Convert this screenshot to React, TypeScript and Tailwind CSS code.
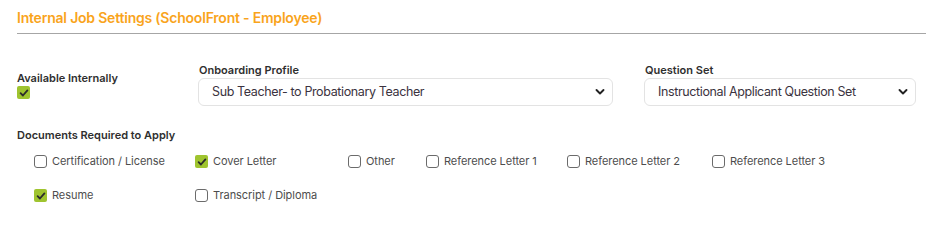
import React from 'react';

// 내부 채용 설정 패널

const FONT = { fontFamily: 'Inter, "Noto Sans", sans-serif' };

const DOCS: { label: string; checked: boolean }[] = [
  { label: 'Certification / License', checked: false },
  { label: 'Cover Letter', checked: true },
  { label: 'Other', checked: false },
  { label: 'Reference Letter 1', checked: false },
  { label: 'Reference Letter 2', checked: false },
  { label: 'Reference Letter 3', checked: false },
  { label: 'Resume', checked: true },
  { label: 'Transcript / Diploma', checked: false },
];

function Box({ checked }: { checked: boolean }): React.ReactElement {
  if (checked) {
    return (
      <span className="flex h-[13px] w-[13px] flex-shrink-0 items-center justify-center rounded-[2px] bg-[#9fc42f]">
        <svg width="10" height="10" viewBox="0 0 10 10" fill="none">
          <path d="M1.6 5.2 L3.9 7.5 L8.4 2.4" stroke="#2b2b2b" strokeWidth="1.8" strokeLinecap="round" strokeLinejoin="round" />
        </svg>
      </span>
    );
  }
  return <span className="h-[13px] w-[13px] flex-shrink-0 rounded-[3px] border border-[#6b6b6b] bg-white" />;
}

function Select({ value }: { value: string }): React.ReactElement {
  return (
    <div className="flex h-[28px] items-center justify-between rounded-[6px] border border-[#e3e3e3] bg-white pl-[13px] pr-[7px]">
      <span className="text-[12.5px] tracking-[-0.03em] text-[#3b3340]">{value}</span>
      <svg width="10" height="8" viewBox="0 0 10 8" fill="none">
        <path d="M1.5 2 L5 5.5 L8.5 2" stroke="#222" strokeWidth="1.9" strokeLinecap="round" strokeLinejoin="round" />
      </svg>
    </div>
  );
}

export default function App(): React.ReactElement {
  return (
    <div className="h-[230px] w-[941px] bg-white pl-[17px] pr-[15px] pt-[9px]" style={FONT}>
      <div className="border-b border-[#a6a6a6] pb-[7px]">
        <h2 className="text-[14px] font-semibold leading-[17px] tracking-[-0.015em] text-[#f9a41c]">
          Internal Job Settings (SchoolFront - Employee)
        </h2>
      </div>

      {/* 상단 설정 행 */}
      <div className="mt-[29px] flex">
        <div className="w-[181px] pt-[8px]">
          <p className="text-[11px] font-semibold leading-[14px] tracking-[0em] text-[#2f2f2f]">Available Internally</p>
          <div className="mt-[1px]">
            <Box checked />
          </div>
        </div>
        <div className="w-[415px]">
          <p className="pl-[1px] text-[11px] font-semibold leading-[14px] tracking-[0em] text-[#2f2f2f]">Onboarding Profile</p>
          <div className="mt-[1px]">
            <Select value="Sub Teacher- to Probationary Teacher" />
          </div>
        </div>
        <div className="ml-[31px] w-[272px]">
          <p className="pl-[1px] text-[11px] font-semibold leading-[14px] tracking-[0em] text-[#2f2f2f]">Question Set</p>
          <div className="mt-[1px]">
            <Select value="Instructional Applicant Question Set" />
          </div>
        </div>
      </div>

      {/* 필요 서류 */}
      <p className="mt-[22px] text-[11px] font-semibold leading-[14px] tracking-[0em] text-[#2f2f2f]">Documents Required to Apply</p>
      <div className="mt-[13px] grid grid-cols-[161px_153px_78px_141px_145px_auto] gap-y-[21px] pl-[17px]">
        {DOCS.map((d) => (
          <div key={d.label} className="flex h-[13px] items-center gap-[5px]">
            <Box checked={d.checked} />
            <span className="whitespace-nowrap text-[11px] tracking-[-0.005em] text-[#4d4d4d]">{d.label}</span>
          </div>
        ))}
      </div>
    </div>
  );
}
